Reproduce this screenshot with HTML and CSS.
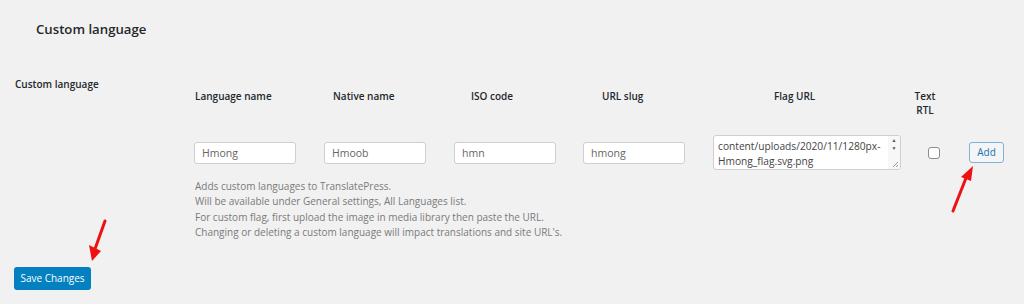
FILE: index.html
```html
<!DOCTYPE html>
<html>
<head>
<meta charset="utf-8">
<link rel="stylesheet" href="styles.css">
</head>
<body>
<div class="page">
  <h2 class="title">Custom language</h2>
  <div class="section">
    <div class="label">Custom language</div>
    <div class="content">
      <div class="grid">
        <div class="th c1">Language name</div>
        <div class="th c2">Native name</div>
        <div class="th c3">ISO code</div>
        <div class="th c4">URL slug</div>
        <div class="th c5">Flag URL</div>
        <div class="th c6">Text<br>RTL</div>
        <div class="th"></div>

        <div class="td"><div class="input">Hmong</div></div>
        <div class="td"><div class="input">Hmoob</div></div>
        <div class="td"><div class="input">hmn</div></div>
        <div class="td"><div class="input">hmong</div></div>
        <div class="td">
          <div class="textarea">
            <div class="ta-text">
              <div class="ta-line">content/uploads/2020/11/1280px-</div>
              <div class="ta-line">Hmong_flag.svg.png</div>
            </div>
            <div class="ta-scroll">
              <span class="arr">&#9650;</span>
              <span class="arr">&#9660;</span>
              <svg class="grip" width="7" height="7" viewBox="0 0 7 7"><path d="M6 1L1 6M6 4L4 6" stroke="#999" stroke-width="1"/></svg>
            </div>
          </div>
        </div>
        <div class="td"><div class="checkbox"></div></div>
        <div class="td"><div class="btn-add">Add</div></div>
      </div>
      <div class="desc">
        <p>Adds custom languages to TranslatePress.</p>
        <p>Will be available under General settings, All Languages list.</p>
        <p>For custom flag, first upload the image in media library then paste the URL.</p>
        <p>Changing or deleting a custom language will impact translations and site URL's.</p>
      </div>
    </div>
  </div>
  <div class="btn-save">Save Changes</div>
  <svg class="arrows" width="1024" height="304" viewBox="0 0 1024 304">
    <g stroke="#ee1111" stroke-width="3" stroke-linecap="round" fill="none">
      <path d="M105 221 L95 249"/>
      <path d="M953 211 L966 178"/>
    </g>
    <path d="M92 261 L89 245 L101 251 Z" fill="#ee1111"/>
    <path d="M973 166 L961 177 L971 181 Z" fill="#ee1111"/>
  </svg>
</div>
</body>
</html>
```
FILE: styles.css
```css
html, body {
  margin: 0;
  padding: 0;
  background: #f1f1f1;
}
body {
  font-family: "Open Sans", "Noto Sans", sans-serif;
  color: #23282d;
  width: 1024px;
  height: 304px;
  overflow: hidden;
}
.page {
  position: relative;
  height: 304px;
}
.title {
  margin: 0;
  padding: 19px 0 0 36px;
  font-size: 13.2px;
  font-weight: 600;
  line-height: 20px;
  color: #23282d;
}
.section {
  display: flex;
  margin-top: 37px;
}
.label {
  width: 194px;
  flex: none;
  padding-left: 15px;
  box-sizing: border-box;
  font-size: 10px;
  font-weight: 600;
  line-height: 16px;
}
.content {
  padding-top: 13px;
}
.grid {
  display: grid;
  grid-template-columns: 130px 130px 129px 130px 201px 41px 60px;
  align-items: center;
}
.th {
  align-self: start;
  font-size: 10px;
  font-weight: 600;
  line-height: 14px;
  height: 46px;
}
.c1 { padding-left: 1px; }
.c2 { padding-left: 9px; }
.c3 { padding-left: 17px; }
.c4 { padding-left: 19px; }
.c5 { padding-left: 61px; }
.c6 { padding-left: 0; text-align: center; width: 22px; }
.td {
  display: flex;
  align-items: center;
}
.input {
  width: 102px;
  height: 22px;
  box-sizing: border-box;
  background: #fff;
  border: 1px solid #cfcfcf;
  border-radius: 3px;
  font-size: 10.5px;
  color: #666;
  line-height: 20px;
  padding-left: 7px;
}
.textarea {
  width: 188px;
  height: 35px;
  box-sizing: border-box;
  background: #fff;
  border: 1px solid #cfcfcf;
  border-radius: 3px;
  display: flex;
  overflow: hidden;
}
.ta-text {
  flex: 1;
  padding: 3px 0 0 4px;
  font-size: 10.2px;
  line-height: 15px;
  color: #444;
}
.ta-line { white-space: nowrap; }
.ta-scroll {
  width: 12px;
  background: #f7f7f7;
  display: flex;
  flex-direction: column;
  align-items: center;
  position: relative;
}
.arr {
  font-size: 5px;
  line-height: 7px;
  color: #555;
  margin-top: 1px;
}
.grip {
  position: absolute;
  right: 1px;
  bottom: 1px;
}
.checkbox {
  width: 12px;
  height: 12px;
  margin-left: 14px;
  box-sizing: border-box;
  background: #fff;
  border: 1px solid #8c8c8c;
  border-radius: 3px;
}
.btn-add {
  width: 35px;
  height: 21px;
  margin-left: 14px;
  box-sizing: border-box;
  border: 1px solid #7fb2d6;
  border-radius: 3px;
  background: #f3f5f6;
  color: #2271b1;
  font-size: 10px;
  line-height: 19px;
  text-align: center;
}
.desc {
  margin-top: 9px;
  padding-left: 1px;
  font-size: 10px;
  color: #7a7a7a;
  line-height: 15.4px;
}
.desc p { margin: 0; }
.btn-save {
  position: absolute;
  left: 14px;
  top: 267px;
  width: 77px;
  height: 23px;
  box-sizing: border-box;
  background: #0280c0;
  border-radius: 3px;
  color: #fff;
  font-size: 10px;
  line-height: 23px;
  text-align: center;
}
.arrows {
  position: absolute;
  left: 0;
  top: 0;
  pointer-events: none;
}
```
